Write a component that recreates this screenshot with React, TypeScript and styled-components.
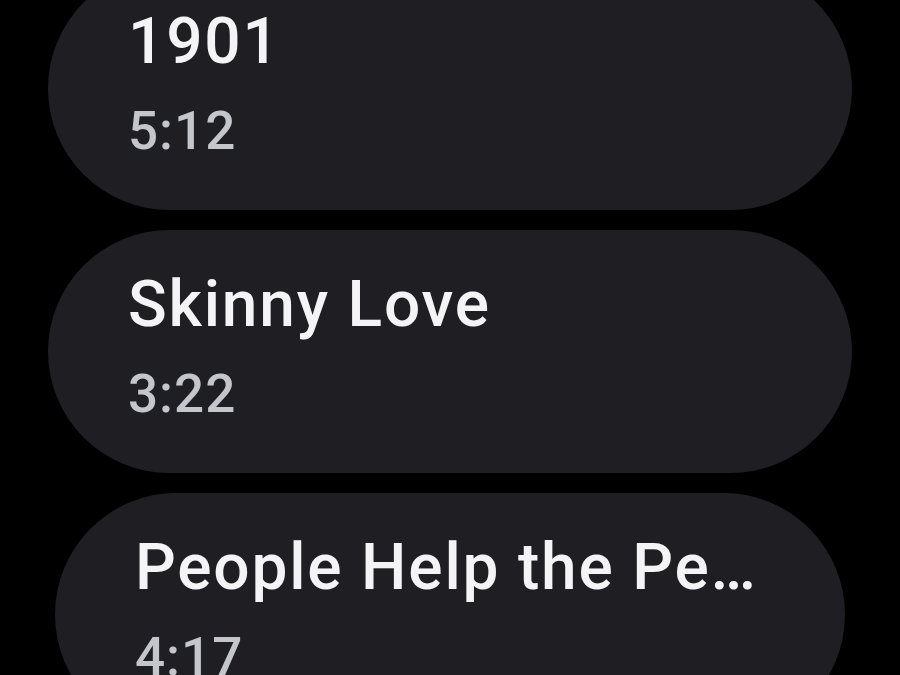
import * as React from 'react';
import styled, { createGlobalStyle } from 'styled-components';

type Track = {
  id: number;
  title: string;
  duration: string;
  inset?: number;
};

const tracks: Track[] = [
  { id: 1, title: '1901', duration: '5:12' },
  { id: 2, title: 'Skinny Love', duration: '3:22' },
  { id: 3, title: 'People Help the Pe…', duration: '4:17', inset: 7 },
];

const App: React.FC = () => {
  return (
    <>
      <GlobalStyle />
      <Screen>
        <TrackList>
          {tracks.map(({ id, title, duration, inset }) => (
            <Chip key={id} $inset={inset || 0}>
              <Title>{title}</Title>
              <Duration>{duration}</Duration>
            </Chip>
          ))}
        </TrackList>
      </Screen>
    </>
  );
};

export default App;

const GlobalStyle = createGlobalStyle`
  html, body {
    margin: 0;
    padding: 0;
    background: #000;
    overflow: hidden;
  }
  body {
    font-family: Roboto, "Noto Sans", "Liberation Sans", sans-serif;
  }
`;

const Screen = styled.main`
  width: 900px;
  height: 675px;
  background: #000;
  overflow: hidden;
`;

// list is scrolled a little, so the first chip is cut off at the top
const TrackList = styled.ul`
  list-style: none;
  margin: -33px 0 0;
  padding: 0 48px;
  display: flex;
  flex-direction: column;
  gap: 20px;
`;

const Chip = styled.li<{ $inset: number }>`
  box-sizing: border-box;
  height: 243px;
  margin: 0 ${(p) => p.$inset}px;
  padding: 38px 60px 0 80px;
  border-radius: 122px;
  background: #1f1f23;
  display: flex;
  flex-direction: column;
  gap: 21px;
  min-width: 0;
`;

const Title = styled.div`
  font-size: 64px;
  line-height: 74px;
  font-weight: 500;
  letter-spacing: 1.8px;
  color: #f4f4f6;
  white-space: nowrap;
  overflow: hidden;
  text-overflow: ellipsis;
`;

const Duration = styled.div`
  font-size: 53px;
  line-height: 62px;
  font-weight: 500;
  letter-spacing: 1px;
  color: #c5c6cc;
`;
